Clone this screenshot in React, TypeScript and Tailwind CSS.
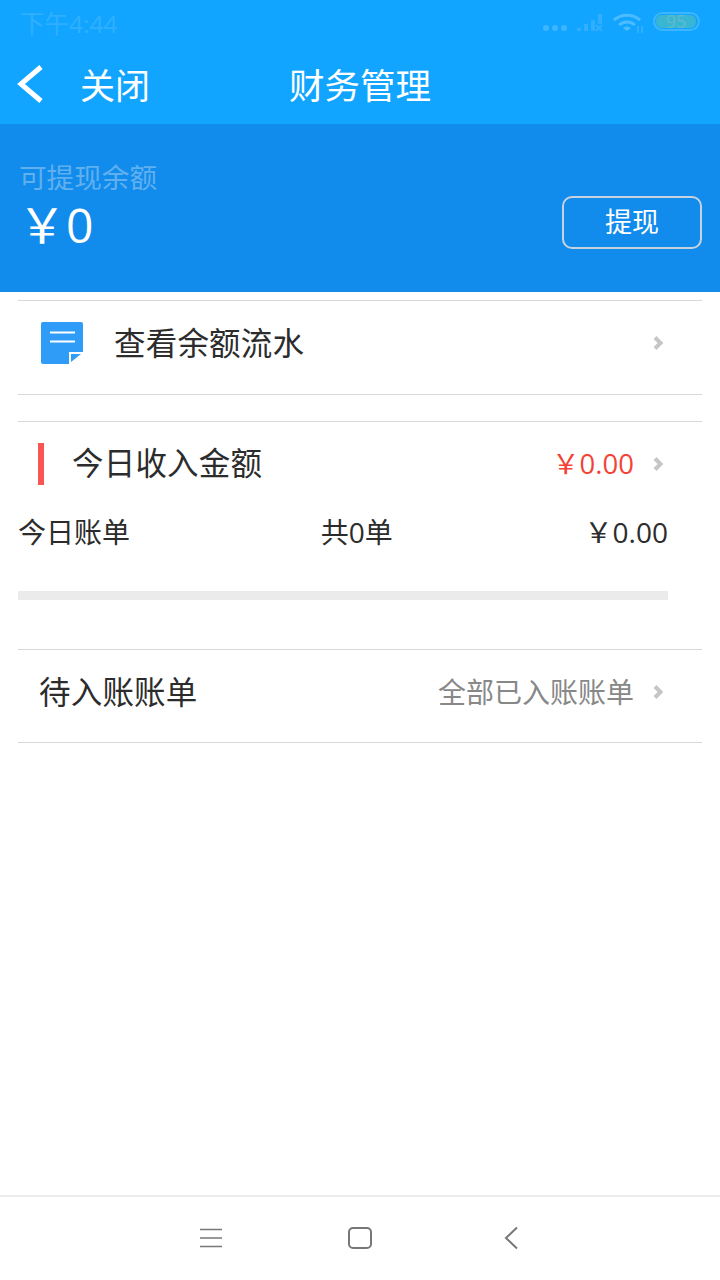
import React from "react";

const F = { fontFamily: '"Open Sans", "Noto Sans CJK SC", sans-serif' };
const Chevron = () => (
  <svg width="12" height="14" viewBox="0 0 12 14" className="shrink-0">
    <path d="M2 1.500 L7.500 7 L2 12.500" fill="none" stroke="#c6c6c6" strokeWidth="4" />
  </svg>
);

export default function App() {
  return (
    <div className="w-[720px] h-[1280px] bg-white flex flex-col overflow-hidden" style={F}>
      <div className="h-[124px] bg-[#12a5ff] flex flex-col text-white">
        <div className="h-[48px] flex items-center pl-[20px] relative">
          <span className="text-[24.500px] text-[#30afff]">下午4:44</span>
          <div className="absolute left-[543px] top-[12px] flex items-start">
            <svg width="24" height="20" viewBox="0 0 24 20"><circle cx="3" cy="16" r="3" fill="#3db5ff"/><circle cx="12" cy="16" r="3" fill="#3db5ff"/><circle cx="21" cy="16" r="3" fill="#3db5ff"/></svg>
            <svg width="28" height="20" viewBox="0 0 28 20" className="ml-[9px]"><path d="M1 19h4v-3H1zM8 19h4v-7H8zM15 19h4V8h-4zM22 12h4V2h-4z" fill="#30aeff"/><path d="M20 13l6 6M26 13l-6 6" stroke="#30aeff" strokeWidth="2"/></svg>
            <svg width="30" height="22" viewBox="0 0 30 22" className="ml-[9px]"><path d="M1 8a20 20 0 0 1 26 0M6 13a12 12 0 0 1 16 0" fill="none" stroke="#4dbbff" strokeWidth="3"/><path d="M14 19l-4-3a6 6 0 0 1 8 0z" fill="#4dbbff"/><path d="M25 14v7M29 14v7" stroke="#30aeff" strokeWidth="2"/></svg>
            <div className="ml-[10px] w-[47px] h-[19px] rounded-[10px] border-2 border-[#3db5ff] p-[1px] flex">
              <div className="w-[40px] h-[13px] rounded-[6px] bg-[#3ab6d5] text-[18px] leading-[13px] text-center text-[#62bac8]">95</div>
            </div>
          </div>
        </div>
        <div className="relative flex-1 flex items-center pl-[17px]">
          <svg width="26" height="40" viewBox="0 0 26 40" className="mt-[-4px]"><path d="M24 3 L4 20 L24 37" fill="none" stroke="#fff" strokeWidth="5"/></svg>
          <span className="ml-[37px] text-[35px]">关闭</span>
          <span className="absolute left-0 right-0 text-center text-[35.500px]">财务管理</span>
        </div>
      </div>

      <div className="h-[168px] bg-[#118bec] flex items-end justify-between pl-[19px] pr-[18px] pb-[37px]">
        <div className="flex flex-col">
          <span className="text-[27.600px] leading-[36px] text-[#60b0f0] mt-[-1px] mb-[1px]">可提现余额</span>
          <span className="text-[48px] leading-[60px] text-white mt-[-1px] ml-[-1px]">￥0</span>
        </div>
        <button className="w-[140px] h-[53px] mb-[6px] border-2 border-[#c8d2dc] rounded-[10px] text-white text-[27px]">提现</button>
      </div>

      <div className="mx-[18px] mt-[8px] h-[95px] border-y border-[#d8d8d8] flex items-center pl-[23px] pr-[37px] pb-[10px]">
        <svg width="42" height="42" viewBox="0 0 42 42">
          <rect width="42" height="42" rx="2" fill="#2f9cf8"/>
          <path d="M9 10.500h25M9 19.500h25" stroke="#fff" strokeWidth="2"/>
          <path d="M28 42V30h14v12z" fill="#fff"/>
          <path d="M30 32h10L30 40z" fill="#2f9cf8"/>
        </svg>
        <span className="ml-[31px] text-[31.500px] text-[#2c2c2c] flex-1 tracking-[0.2px]">查看余额流水</span>
        <Chevron />
      </div>

      <div className="mx-[18px] mt-[26px] border-t border-[#d8d8d8] h-[84px] flex items-center pl-[20px] pr-[37px]">
        <div className="w-[6px] h-[42px] bg-[#fa5555]" />
        <span className="ml-[28px] text-[31.500px] text-[#2c2c2c] flex-1 tracking-[0.2px] mt-[-2px]">今日收入金额</span>
        <span className="text-[27.500px] text-[#f44336] mr-[19px]">￥0.00</span>
        <Chevron />
      </div>
      <div className="ml-[18px] w-[650px] flex items-center justify-between h-[54px] text-[28px] text-[#2c2c2c]">
        <span>今日账单</span>
        <span className="ml-[-1px]">共0单</span>
        <span>￥0.00</span>
      </div>
      <div className="ml-[18px] w-[650px] h-[9px] mt-[32px] bg-[#ebebeb]" />

      <div className="mx-[18px] mt-[49px] h-[94px] border-y border-[#d8d8d8] flex items-center pl-[21px] pr-[37px] pb-[9px]">
        <span className="text-[31.500px] text-[#2c2c2c] flex-1 tracking-[0.2px]">待入账账单</span>
        <span className="text-[28px] text-[#888] mr-[19px]">全部已入账账单</span>
        <Chevron />
      </div>

      <div className="flex-1" />
      <div className="h-[85px] border-t-2 border-[#ededed] flex items-center pl-[199px] pb-[2px]">
        <svg width="24" height="20" viewBox="0 0 24 20"><path d="M1 1.500h22M1 10h22M1 18.500h22" stroke="#777" strokeWidth="1.500"/></svg>
        <svg width="24" height="22" viewBox="0 0 24 22" className="ml-[125px]"><rect x="1" y="1" width="22" height="20" rx="4" fill="none" stroke="#777" strokeWidth="2"/></svg>
        <svg width="14" height="24" viewBox="0 0 14 24" className="ml-[132px]"><path d="M13 1.500L2 12l11 10.500" fill="none" stroke="#777" strokeWidth="2"/></svg>
      </div>
    </div>
  );
}
